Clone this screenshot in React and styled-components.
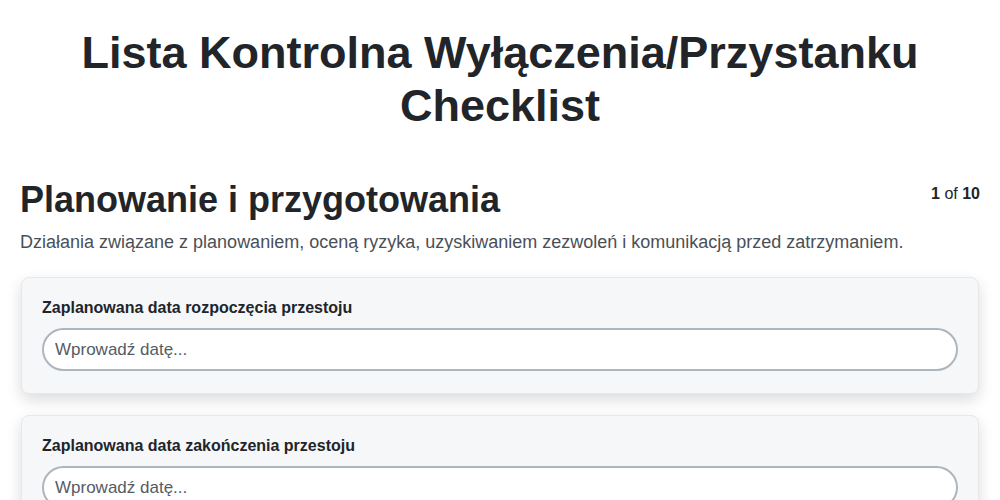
import React from "react";
import styled, { createGlobalStyle } from "styled-components";

const Global = createGlobalStyle`
  html, body { margin: 0; padding: 0; background: #fff; }
  body { font-family: "Liberation Sans", Arial, sans-serif; color: #212529; }
  * { box-sizing: border-box; }
`;

const Page = styled.div`
  padding: 0 20px 20px 20px;
`;

const Title = styled.h1`
  margin: 0;
  padding-top: 26px;
  text-align: center;
  font-size: 45px;
  line-height: 53px;
  font-weight: 700;
  color: #212529;
`;

const SectionHeader = styled.div`
  display: flex;
  justify-content: space-between;
  align-items: flex-start;
  margin-top: 46px;
`;

const SectionTitle = styled.h2`
  margin: 0;
  font-size: 36px;
  line-height: 43px;
  font-weight: 700;
`;

const Counter = styled.div`
  font-size: 16px;
  line-height: 20px;
  padding-top: 6px;
  color: #212529;
  b { font-weight: 700; }
`;

const Description = styled.p`
  margin: 10px 0 24px 0;
  font-size: 18px;
  line-height: 22px;
  color: #495057;
`;

const Cards = styled.div`
  display: flex;
  flex-direction: column;
  gap: 21px;
`;

const Card = styled.div`
  margin: 0 1px;
  background: #f6f7f9;
  border: 1px solid #e6e8ec;
  border-radius: 8px;
  box-shadow: 0 6px 15px rgba(0, 0, 0, 0.14);
  padding: 20px 20px 22px 20px;
`;

const Label = styled.label`
  display: block;
  font-size: 16px;
  font-weight: 700;
  line-height: 20px;
  margin-bottom: 10px;
  color: #212529;
`;

const Input = styled.input`
  display: block;
  width: 100%;
  height: 43px;
  border: 2px solid #adb5bd;
  border-radius: 22px;
  background: #fff;
  padding: 0 11px;
  font-family: "Liberation Sans", Arial, sans-serif;
  font-size: 17px;
  color: #212529;
  outline: none;
  &::placeholder { color: #555b66; }
`;

const fields = [
  "Zaplanowana data rozpoczęcia przestoju",
  "Zaplanowana data zakończenia przestoju",
];

export default function App() {
  return (
    <>
      <Global />
      <Page>
        <Title>Lista Kontrolna Wyłączenia/Przystanku Checklist</Title>
        <SectionHeader>
          <SectionTitle>Planowanie i przygotowania</SectionTitle>
          <Counter>
            <b>1</b> of <b>10</b>
          </Counter>
        </SectionHeader>
        <Description>
          Działania związane z planowaniem, oceną ryzyka, uzyskiwaniem zezwoleń i komunikacją przed zatrzymaniem.
        </Description>
        <Cards>
          {fields.map((f) => (
            <Card key={f}>
              <Label>{f}</Label>
              <Input placeholder="Wprowadź datę..." />
            </Card>
          ))}
        </Cards>
      </Page>
    </>
  );
}
